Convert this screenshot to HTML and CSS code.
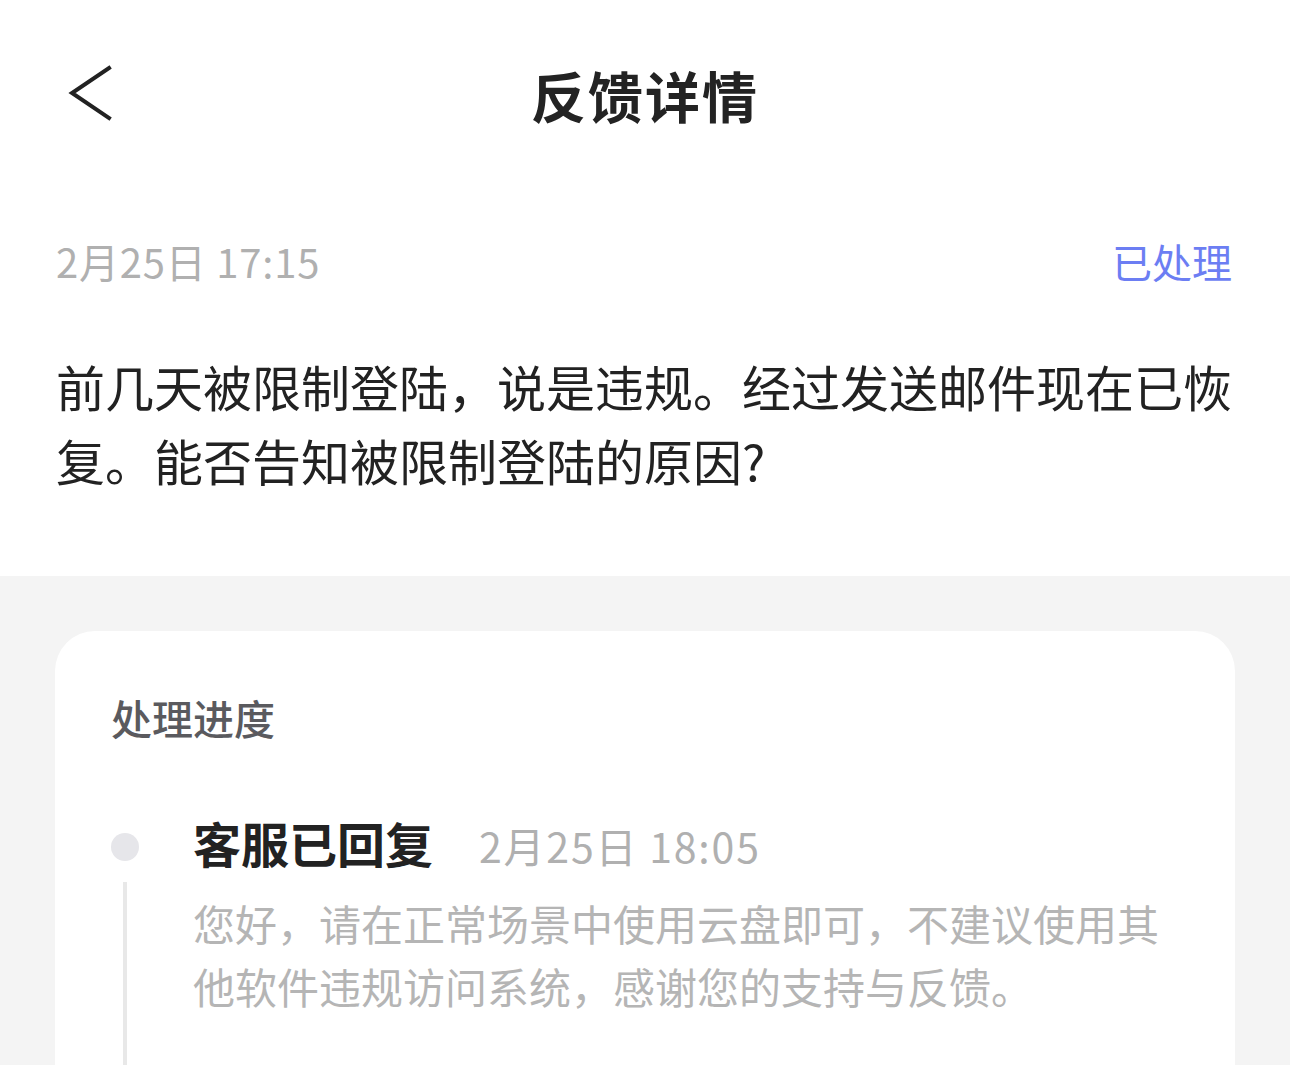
FILE: index.html
```html
<!DOCTYPE html>
<html lang="zh-CN">
   <head>
      <meta charset="UTF-8">
      <meta name="viewport" content="width=device-width, initial-scale=1.0"/>
      <title>反馈详情</title>
      <link rel="stylesheet" href="styles.css">
   </head>
   <body>
      <header class="nav">
         <a class="nav-back" href="#" aria-label="返回">
            <svg width="48" height="60" viewBox="0 0 48 60">
               <path d="M43 4 L6 29 L43 54" fill="none" stroke="#222" stroke-width="4" stroke-linecap="square" stroke-linejoin="miter"/>
            </svg>
         </a>
         <h1 class="nav-title">反馈详情</h1>
         <span></span>
      </header>

      <section class="feedback">
         <div class="feedback-meta">
            <span class="feedback-date">2月25日 17:15</span>
            <span class="feedback-status">已处理</span>
         </div>
         <p class="feedback-text">前几天被限制登陆，说是违规。经过发送邮件现在已恢复。能否告知被限制登陆的原因?</p>
      </section>

      <section class="progress-area">
         <div class="progress-card">
            <h2 class="progress-title">处理进度</h2>

            <div class="step">
               <div class="step-rail">
                  <span class="step-dot"></span>
                  <span class="step-line"></span>
               </div>
               <div class="step-body">
                  <div class="step-head">
                     <span class="step-name">客服已回复</span>
                     <span class="step-date">2月25日 18:05</span>
                  </div>
                  <p class="step-text">您好，请在正常场景中使用云盘即可，不建议使用其他软件违规访问系统，感谢您的支持与反馈。</p>
               </div>
            </div>
         </div>
      </section>
   </body>
</html>
```

FILE: styles.css
```css
*
{
   box-sizing: border-box;
}

html,
body
{
   margin: 0;
   padding: 0;
   background: #ffffff;
}

body
{
   width: 1290px;
   height: 1065px;
   overflow: hidden;
   font-family: "Noto Sans CJK SC", "Noto Sans", sans-serif;
   color: #222222;
}

.nav
{
   display: grid;
   grid-template-columns: 1fr auto 1fr;
   align-items: center;
   height: 194px;
   padding: 0 66px 6px 66px;
}

.nav-back
{
   display: flex;
   width: 48px;
   height: 60px;
}

.nav-title
{
   margin: 0;
   font-size: 55px;
   font-weight: 700;
   line-height: 60px;
   letter-spacing: 2px;
   color: #232323;
}

.feedback
{
   padding: 39px 56px 79px 56px;
}

.feedback-meta
{
   display: flex;
   justify-content: space-between;
   align-items: center;
   height: 56px;
   padding-right: 2px;
   font-size: 40px;
   line-height: 56px;
}

.feedback-date
{
   color: #b0b0b0;
   letter-spacing: 0.8px;
}

.feedback-status
{
   color: #6c7ef3;
}

.feedback-text
{
   margin: 60px 0 0 0;
   font-size: 49px;
   line-height: 74px;
   color: #222222;
}

.progress-area
{
   background: #f4f4f4;
   padding: 55px 55px 0 55px;
   height: 489px;
}

.progress-card
{
   background: #ffffff;
   border-radius: 40px 40px 0 0;
   height: 100%;
   padding: 58px 40px 0 56px;
}

.progress-title
{
   margin: 0;
   font-size: 41px;
   font-weight: 500;
   line-height: 56px;
   color: #5a5a5e;
}

.step
{
   display: flex;
   gap: 54px;
   margin-top: 67px;
   height: 270px;
}

.step-rail
{
   display: flex;
   flex-direction: column;
   align-items: center;
   width: 28px;
   padding-top: 21px;
}

.step-dot
{
   width: 28px;
   height: 28px;
   border-radius: 50%;
   background: #e6e6ea;
}

.step-line
{
   flex: 1;
   width: 4px;
   margin-top: 21px;
   background: #e8e8e8;
}

.step-body
{
   width: 990px;
}

.step-head
{
   display: flex;
   align-items: baseline;
   gap: 46px;
   line-height: 60px;
}

.step-name
{
   font-size: 48px;
   font-weight: 700;
   color: #222222;
}

.step-date
{
   font-size: 41px;
   letter-spacing: 1.8px;
   color: #b0b0b0;
}

.step-text
{
   margin: 16px 0 0 0;
   font-size: 42px;
   line-height: 63px;
   color: #b5b5b5;
}
```
